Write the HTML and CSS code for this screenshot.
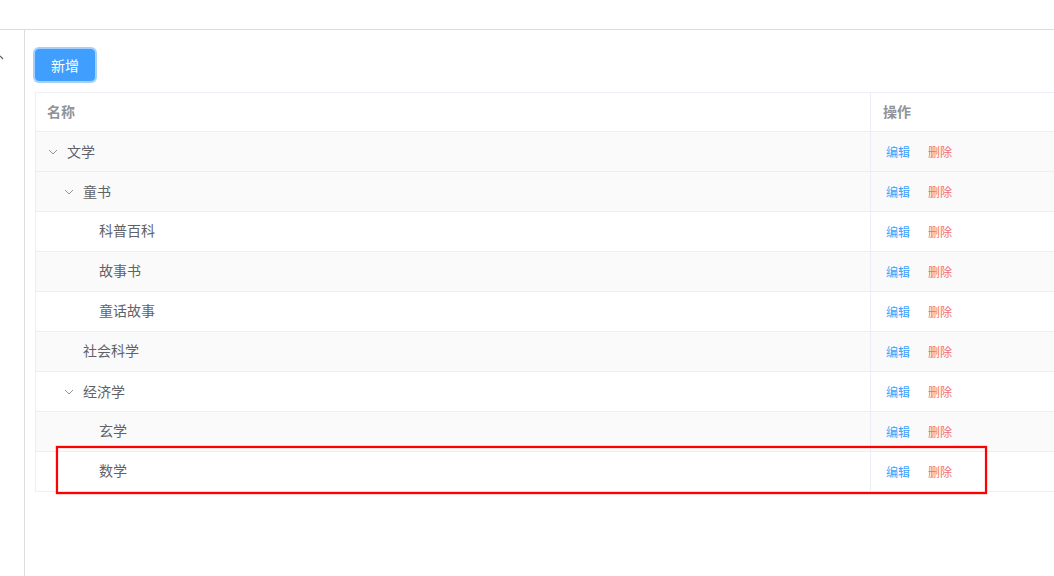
FILE: index.html
```html
<!DOCTYPE html>
<html lang="zh">
<head>
<meta charset="utf-8">
<link rel="stylesheet" href="styles.css">
</head>
<body>
<div class="topbar"></div>
<div class="layout">
  <aside class="sidebar">
    <svg class="side-mark" width="6" height="6" viewBox="0 0 6 6"><path d="M0 1 L3 4" stroke="#606266" stroke-width="1.2" fill="none"/></svg>
  </aside>
  <main class="main">
    <div class="toolbar"><button class="btn-primary">新增</button></div>
    <table class="tree-table">
      <colgroup><col class="col-name"><col class="col-op"></colgroup>
      <thead>
        <tr><th>名称</th><th class="op-head">操作</th></tr>
      </thead>
      <tbody>
        <tr class="stripe"><td><span class="lv0"><svg class="arrow" viewBox="0 0 10 6"><path d="M1 1 L5 5 L9 1" /></svg>文学</span></td><td class="ops"><a class="edit">编辑</a><a class="del">删除</a></td></tr>
        <tr class="stripe"><td><span class="lv1"><svg class="arrow" viewBox="0 0 10 6"><path d="M1 1 L5 5 L9 1" /></svg>童书</span></td><td class="ops"><a class="edit">编辑</a><a class="del">删除</a></td></tr>
        <tr><td><span class="lv2">科普百科</span></td><td class="ops"><a class="edit">编辑</a><a class="del">删除</a></td></tr>
        <tr class="stripe"><td><span class="lv2">故事书</span></td><td class="ops"><a class="edit">编辑</a><a class="del">删除</a></td></tr>
        <tr><td><span class="lv2">童话故事</span></td><td class="ops"><a class="edit">编辑</a><a class="del">删除</a></td></tr>
        <tr class="stripe"><td><span class="lv1 noarrow">社会科学</span></td><td class="ops"><a class="edit">编辑</a><a class="del">删除</a></td></tr>
        <tr><td><span class="lv1"><svg class="arrow" viewBox="0 0 10 6"><path d="M1 1 L5 5 L9 1" /></svg>经济学</span></td><td class="ops"><a class="edit">编辑</a><a class="del">删除</a></td></tr>
        <tr class="stripe"><td><span class="lv2">玄学</span></td><td class="ops"><a class="edit">编辑</a><a class="del">删除</a></td></tr>
        <tr><td><span class="lv2">数学</span></td><td class="ops"><a class="edit">编辑</a><a class="del">删除</a></td></tr>
      </tbody>
    </table>
  </main>
</div>
<div class="highlight"></div>
</body>
</html>
```
FILE: styles.css
```css
* { box-sizing: border-box; }
html, body { margin: 0; padding: 0; }
body {
  width: 1054px;
  height: 576px;
  overflow: hidden;
  background: #fff;
  font-family: "Noto Sans CJK SC", "Noto Sans", sans-serif;
  font-size: 14px;
  color: #606266;
  position: relative;
}
.topbar {
  height: 30px;
  border-bottom: 1px solid #dcdcdc;
}
.layout {
  display: flex;
  height: 546px;
}
.sidebar {
  width: 25px;
  flex: none;
  border-right: 1px solid #dcdcdc;
  position: relative;
}
.side-mark {
  position: absolute;
  left: 0;
  top: 25px;
}
.main {
  flex: 1;
  min-width: 0;
  overflow: hidden;
  padding: 18px 0 0 10px;
}
.toolbar {
  height: 44px;
  padding-top: 1px;
}
.btn-primary {
  width: 60px;
  height: 32px;
  border: 1px solid #409eff;
  border-radius: 4px;
  background: #409eff;
  color: #fff;
  font-family: inherit;
  font-size: 14px;
  padding: 0 0 1px;
  box-shadow: 0 0 0 2px #a3d0fd;
  outline: none;
}
.tree-table {
  border-collapse: collapse;
  width: 1060px;
  border-left: 1px solid #ebeef5;
  border-top: 1px solid #ebeef5;
}
.col-name { width: 835px; }
.tree-table th {
  height: 39px;
  text-align: left;
  font-weight: bold;
  font-size: 14px;
  color: #909399;
  padding: 0 11px 2px;
  border-bottom: 1px solid #ebeef5;
  border-right: 1px solid #ebeef5;
}
.tree-table th.op-head { padding-left: 12px; }
.tree-table td {
  height: 40px;
  padding: 0 11px 3px;
  border-bottom: 1px solid #ebeef5;
  border-right: 1px solid #ebeef5;
  line-height: 20px;
}
.tree-table tr.stripe td { background: #fafafa; }
.lv0, .lv1, .lv2 {
  display: inline-flex;
  align-items: center;
}
.lv1 { padding-left: 16px; }
.lv2 { padding-left: 52px; }
.noarrow { padding-left: 36px; }
.arrow {
  width: 10px;
  height: 6px;
  margin-right: 9px;
  margin-left: 1px;
  margin-top: 1px;
  fill: none;
  stroke: #909399;
  stroke-width: 1;
}
.tree-table td.ops {
  font-size: 12px;
  padding: 0 11px 0 15px;
}
.ops a { display: inline-block; }
.edit { color: #409eff; margin-right: 18px; }
.del { color: #f56c6c; }
.highlight {
  position: absolute;
  left: 56px;
  top: 446px;
  width: 931px;
  height: 48px;
  border: 2px solid #ff0000;
  box-shadow: 0 0 1px #ff0000, inset 0 0 1px #ff0000;
}
```
